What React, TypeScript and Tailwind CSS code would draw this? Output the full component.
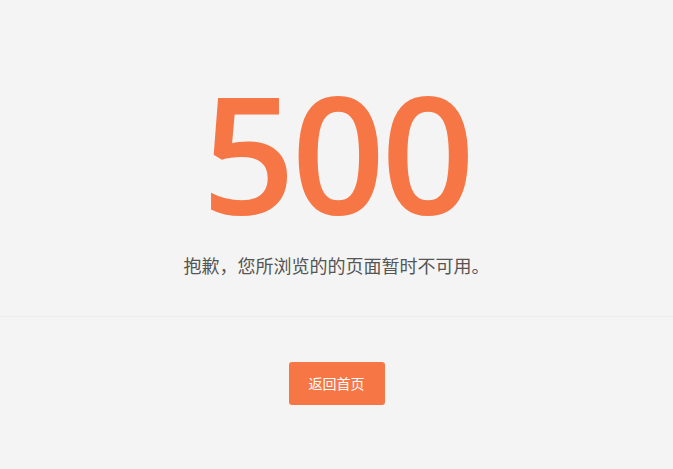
export default function App() {
  return (
    <div className="min-h-screen bg-[#f4f4f4] font-['Open_Sans','Noto_Sans_CJK_SC',sans-serif]">
      <div className="border-b border-[#ebebeb] pt-[52px] pb-[37px] text-center">
        <h1 className="text-[164px] leading-[197px] font-semibold text-[#f77645] tracking-[-4px]">500</h1>
        <p className="mt-[4px] text-[18px] leading-[26px] text-[#555]">
          抱歉，您所浏览的的页面暂时不可用。
        </p>
      </div>
      <div className="flex justify-center pt-[45px]">
        <button className="h-[43px] w-[96px] rounded-[3px] bg-[#f77645] text-[14px] text-white">
          返回首页
        </button>
      </div>
    </div>
  );
}
